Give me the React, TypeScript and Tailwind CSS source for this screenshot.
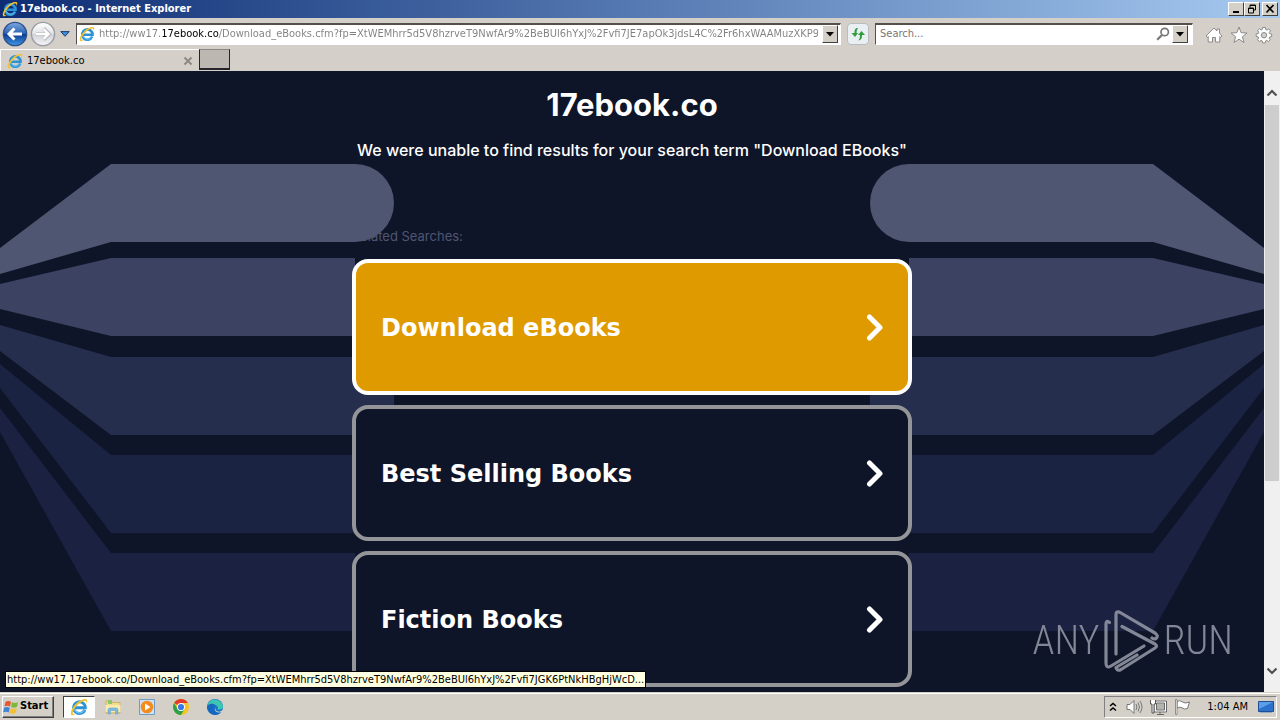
import React from "react";

const CHROME_FONT = "font-['DejaVu_Sans_Condensed','DejaVu_Sans',sans-serif]";

const PAGE_URL =
  "http://ww17.17ebook.co/Download_eBooks.cfm?fp=XtWEMhrr5d5V8hzrveT9NwfAr9%2BeBUl6hYxJ%2Fvfi7JE7apOk3jdsL4C%2Fr6hxWAAMuzXKP957";
const LINK_URL =
  "http://ww17.17ebook.co/Download_eBooks.cfm?fp=XtWEMhrr5d5V8hzrveT9NwfAr9%2BeBUl6hYxJ%2Fvfi7JGK6PtNkHBgHjWcD...";

const RAISED = "border border-t-white border-l-white border-r-[#404040] border-b-[#404040] bg-[#d4d0c8]";

function IeLogo({ className }: { className: string }) {
  return (
    <svg viewBox="0 0 16 16" className={className} aria-hidden="true">
      <path d="M13.2 10.6A5.2 5.2 0 1 1 13.6 8.7H4.4" fill="none" stroke="#2b93d6" strokeWidth="2.6" />
      <path d="M12.6 11A4.8 4.8 0 0 1 4 10" fill="none" stroke="#6cc4f2" strokeWidth="1" />
      <path
        d="M1.2 15C-.6 12.500 3.500 5.500 9 2.300C12 .600 15.500 .200 15.300 2.600C15.200 3.600 14.700 4.600 14.300 5.200C14.900 3 14 1.900 11.800 2.800C7 4.600 2.500 10.500 2.400 13.500C2.500 14.500 3.500 14.500 5 13.700C3.600 15.100 2 15.800 1.200 15Z"
        fill="#f2c230"
      />
    </svg>
  );
}

function NavArrow({ id, muted, className }: { id: string; muted?: boolean; className: string }) {
  return (
    <svg viewBox="0 0 26 26" className={className} aria-hidden="true">
      <defs>
        <linearGradient id={id} x1="0" y1="0" x2="0" y2="1">
          <stop offset="0" stopColor={muted ? "#ffffff" : "#7fa9de"} />
          <stop offset=".48" stopColor={muted ? "#e3e5e8" : "#2a62b4"} />
          <stop offset=".52" stopColor={muted ? "#cfd2d8" : "#0b3c92"} />
          <stop offset="1" stopColor={muted ? "#f6f7f8" : "#3f9be6"} />
        </linearGradient>
      </defs>
      <circle cx="13" cy="13" r="11.600" fill={`url(#${id})`} stroke={muted ? "#9a9ca4" : "#2c4f8c"} strokeWidth="1.400" />
      <path
        d={muted ? "M6 13H19M13.500 7.500L19 13L13.500 18.500" : "M20 13H7M12.500 7.500L7 13L12.500 18.500"}
        fill="none"
        stroke={muted ? "#b9bbc1" : "#ffffff"}
        strokeWidth={muted ? 4 : 3}
      />
      {muted && <path d="M6 13H18M13.500 8L18.500 13L13.500 18" fill="none" stroke="#fff" strokeWidth="2.400" />}
    </svg>
  );
}

function TitleBar() {
  const button = `flex h-[14px] w-4 items-center justify-center ${RAISED}`;
  return (
    <header className="flex h-[18px] shrink-0 items-center bg-linear-to-r from-[#0f2d74] to-[#a6caf0] pl-0.5 pr-0.5">
      <IeLogo className="mr-0.5 size-4" />
      <h1 className="flex-1 text-[11px] leading-[14px] font-bold text-white">17ebook.co - Internet Explorer</h1>
      <div className="flex">
        <button aria-label="Minimize" className={button}>
          <svg viewBox="0 0 12 10" className="h-2.5 w-3"><path d="M3 8H9" stroke="#000" strokeWidth="2" /></svg>
        </button>
        <button aria-label="Restore" className={button}>
          <svg viewBox="0 0 12 10" className="h-2.5 w-3">
            <path d="M4 3.500V1H9.500V6H8M4 1.500H9.500M2.500 4H7.500V9H2.500ZM2.500 4.500H7.500" fill="none" stroke="#000" />
          </svg>
        </button>
        <button aria-label="Close" className={`ml-0.5 ${button}`}>
          <svg viewBox="0 0 12 10" className="h-2.5 w-3"><path d="M2.500 1L9.500 8.500M9.500 1L2.500 8.500" stroke="#000" strokeWidth="1.700" /></svg>
        </button>
      </div>
    </header>
  );
}

function DropButton({ label }: { label: string }) {
  return (
    <button
      aria-label={label}
      className="flex h-[18px] w-4 shrink-0 items-center justify-center border border-t-white border-l-white border-r-[#404040] border-b-[#404040] bg-[#d4d0c8]"
    >
      <svg viewBox="0 0 8 5" className="h-[5px] w-2"><path d="M0 0H8L4 4.500Z" fill="#000" /></svg>
    </button>
  );
}

function NavigationBar() {
  const field = "flex h-[22px] min-w-0 items-center border-t-2 border-l border-b border-r border-t-[#55504c] border-l-[#55504c] border-b-white border-r-white bg-white";
  return (
    <nav className="flex h-[31px] shrink-0 items-center pl-0.5 pr-[7px]">
      <button aria-label="Back"><NavArrow id="back" className="size-[26px]" /></button>
      <button aria-label="Forward" className="ml-0.5"><NavArrow id="forward" muted className="size-[26px]" /></button>
      <button aria-label="Recent pages" className="ml-1 mr-1.5">
        <svg viewBox="0 0 10 6" className="h-1.5 w-2.5"><path d="M.8.600H9.200L5 5.300Z" fill="#3e8fd8" stroke="#1d3f72" /></svg>
      </button>
      <div className={`flex-1 pl-0.5 pr-0.5 ${field}`}>
        <IeLogo className="mr-1 size-4 shrink-0" />
        <input
          aria-label="Address"
          readOnly
          value={PAGE_URL}
          className="min-w-0 flex-1 bg-[linear-gradient(90deg,#808080_64px,#000_64px,#000_120px,#808080_120px)] bg-clip-text text-[11px] leading-4 text-transparent outline-none"
        />
        <span className="w-1" />
        <DropButton label="Show address bar list" />
      </div>
      <button aria-label="Refresh" className="mx-1.5 flex h-[22px] w-[22px] shrink-0 items-center justify-center rounded-sm border border-[#b9bcc0] bg-[#e9eff2]">
        <svg viewBox="0 0 16 14" className="h-3.5 w-4">
          <path d="M8 1C5 1 4.500 3 4.500 6H1.500L5 10L8 6H6.500C6.500 4 7 2.500 8 1Z" fill="#2f9e3c" />
          <path d="M8.500 13.500C11.500 13 12 11 12 8H15L11.500 4L8 8H10C10 10.500 9.500 12 8.500 13.500Z" fill="#2f9e3c" />
        </svg>
      </button>
      <div className={`w-[318px] pl-1 pr-1 ${field}`}>
        <input aria-label="Search" placeholder="Search..." className="min-w-0 flex-1 text-[11px] leading-4 outline-none placeholder:text-[#777]" />
        <svg viewBox="0 0 14 14" className="mr-0.5 size-3.5 shrink-0" aria-hidden="true">
          <circle cx="8.700" cy="5" r="3.700" fill="none" stroke="#777" strokeWidth="1.700" />
          <path d="M6 8L1.200 12.800" stroke="#777" strokeWidth="2.200" />
        </svg>
        <DropButton label="Choose search provider" />
      </div>
      <div className="ml-3 flex shrink-0 gap-[7px] pt-0.5">
        <button aria-label="Home">
          <svg viewBox="0 0 18 18" className="size-[18px]">
            <path d="M9 2L12 5V3H14.500V7.300L17 10L15.500 11.200L14.800 10.500V16H10.500V11.500H7.500V16H3.200V10.500L2.500 11.200L1 10Z" fill="#fff" stroke="#8b8b8b" strokeLinejoin="round" />
          </svg>
        </button>
        <button aria-label="Favorites">
          <svg viewBox="0 0 18 18" className="size-[18px]">
            <path d="M9 1L11.100 6.700L17 7L12.400 10.700L14 16.500L9 13.200L4 16.500L5.600 10.700L1 7L6.900 6.700Z" fill="#fff" stroke="#8b8b8b" strokeLinejoin="round" />
          </svg>
        </button>
        <button aria-label="Tools">
          <svg viewBox="0 0 18 18" className="size-[18px]">
            <path
              d="M7.600 1.500H10.400L10.800 3.600L12 4.100L13.800 2.900L15.500 4.800L14.200 6.500L14.700 7.700L16.700 8V10.600L14.600 11L14.100 12.200L15.300 13.800L13.400 15.600L11.800 14.400L10.600 14.900L10.200 16.900H7.600L7.200 14.900L6 14.400L4.400 15.600L2.500 13.700L3.700 12.100L3.200 10.900L1.200 10.500V7.900L3.300 7.500L3.800 6.300L2.600 4.600L4.500 2.800L6.100 4L7.200 3.600Z"
              fill="#fff" stroke="#8b8b8b" strokeLinejoin="round"
            />
            <circle cx="9" cy="9.200" r="2.700" fill="#d4d0c8" stroke="#8b8b8b" />
          </svg>
        </button>
      </div>
    </nav>
  );
}

function TabStrip() {
  return (
    <div className="flex h-[22px] shrink-0 items-start">
      <div className="flex h-[22px] w-[199px] items-center border-t border-l border-white pl-1.5 pr-1.5">
        <IeLogo className="mr-1 size-4" />
        <span className="flex-1 text-[11px] leading-4 text-black">17ebook.co</span>
        <button aria-label="Close tab">
          <svg viewBox="0 0 10 10" className="size-2.5"><path d="M1.500 1.500L8.500 8.500M8.500 1.500L1.500 8.500" stroke="#8a8784" strokeWidth="1.800" /></svg>
        </button>
      </div>
      <button aria-label="New tab" className="h-[21px] w-[31px] border border-b-2 border-[#25232c] border-t-[#8a8784] bg-[#bdb7b2]" />
    </div>
  );
}

const WING = [
  { fill: "#4f5671", d: "M0 248L111 164H355A39 39 0 0 1 355 242H111L0 274Z" },
  { fill: "#3b4262", d: "M0 284L111 258H355V336H111L0 309Z" },
  { fill: "#262e4e", d: "M0 325L111 357H394V435H111L0 351Z" },
  { fill: "#1b2343", d: "M0 364L111 455H394V533H111L0 388Z" },
  { fill: "#1a2141", d: "M0 408L111 553H355V631H111L0 432Z" },
];

function Backdrop() {
  const wing = WING.map((s) => <path key={s.d} d={s.d} fill={s.fill} />);
  return (
    <svg viewBox="0 71 1264 621" preserveAspectRatio="xMidYMin slice" className="absolute inset-0 h-full w-full" aria-hidden="true">
      {wing}
      <g transform="matrix(-1 0 0 1 1264 0)">{wing}</g>
    </svg>
  );
}

function ResultLink({ label, active }: { label: string; active?: boolean }) {
  return (
    <a
      href="#"
      className={`flex h-[136px] items-center justify-between rounded-2xl border-4 pr-6 pl-[25px] pt-0.5 font-['DejaVu_Sans',sans-serif] text-[24px] leading-8 font-bold text-white ${
        active ? "border-white bg-[#df9a00]" : "border-[#949598] bg-[#0f1528]"
      }`}
    >
      {label}
      <svg viewBox="0 0 18 28" className="h-7 w-[18px]" aria-hidden="true">
        <path d="M3.500 3L14 13.500L3.500 24" fill="none" stroke="#fff" strokeWidth="5" strokeLinecap="round" strokeLinejoin="round" />
      </svg>
    </a>
  );
}

function Watermark() {
  return (
    <div className="absolute right-[31px] bottom-5 flex h-[62px] items-center gap-1 text-[#8f93a1] opacity-90">
      <span className="font-['Roboto_Condensed','Liberation_Sans_Narrow',Roboto,sans-serif] text-[40px] leading-[62px] font-light">ANY</span>
      <svg viewBox="0 0 56 62" className="h-[62px] w-14" fill="none" stroke="currentColor" strokeWidth="3.200" strokeLinejoin="round" strokeLinecap="round" aria-hidden="true">
        <path d="M5.500 12.500Q2 9.500 2 14V53Q2 59 7 56L40 36" />
        <path d="M12 44V5Q12 0 17 3L51 23Q55 26 52 28.500Q50 29.500 48 28" />
        <path d="M18 16.500L51 34Q54 36 51 38L17 59.500Q13 61.500 12 57.500L33 45" />
      </svg>
      <span className="font-['Roboto_Condensed','Liberation_Sans_Narrow',Roboto,sans-serif] text-[40px] leading-[62px] font-light">RUN</span>
    </div>
  );
}

function ScrollBar() {
  return (
    <div className="flex w-4 shrink-0 flex-col bg-[#f0f0f0]">
      <button aria-label="Scroll up" className="flex h-[34px] items-center justify-center pt-2.5">
        <svg viewBox="0 0 12 8" className="h-2 w-3"><path d="M1.500 6.500L6 2L10.500 6.500" fill="none" stroke="#505050" strokeWidth="2.200" /></svg>
      </button>
      <div className="flex flex-1 flex-col">
        <div className="mx-px h-[69%] bg-[#cdcdcd]" />
      </div>
      <button aria-label="Scroll down" className="flex h-[42px] items-center justify-center">
        <svg viewBox="0 0 12 8" className="h-2 w-3"><path d="M1.500 1.500L6 6L10.500 1.500" fill="none" stroke="#505050" strokeWidth="2.200" /></svg>
      </button>
    </div>
  );
}

function Taskbar() {
  const icon = "size-[18px]";
  return (
    <footer className="flex h-7 shrink-0 items-center border-t border-[#d4d0c8] bg-[#d4d0c8] pl-0.5 pr-[3px] shadow-[inset_0_1px_0_#fff]">
      <button className={`flex h-[22px] w-[52px] items-center gap-px text-[11px] font-bold text-black shadow-[inset_-1px_-1px_0_#808080] ${RAISED}`}>
        <svg viewBox="0 0 16 16" className="size-4" aria-hidden="true">
          <path d="M2.500 3Q5 1 8 2.700L7 7.500Q4.500 6 1.500 7.500Z" fill="#e8562c" />
          <path d="M9 3Q12 4.800 15 3L14 7.800Q11 9.500 8 7.900Z" fill="#7db83b" />
          <path d="M1.200 8.700Q4 7.200 6.800 8.800L5.800 13.500Q3 12 0 13.500Z" fill="#3f83d4" />
          <path d="M7.800 9.200Q10.500 10.800 13.800 9.200L12.700 14Q9.500 15.500 6.800 14Z" fill="#f6bf2f" />
        </svg>
        Start
      </button>
      <div className="ml-[9px] flex items-center gap-4">
        <button aria-label="Internet Explorer" className="-mr-[7px] flex h-[22px] w-8 items-center justify-center border border-t-[#404040] border-l-[#404040] border-r-white border-b-white bg-white">
          <IeLogo className={icon} />
        </button>
        <button aria-label="File Explorer">
          <svg viewBox="0 0 18 18" className={icon}>
            <path d="M2 3H7L8 4.500H16V15H2Z" fill="#f3dc8b" stroke="#c9a548" strokeWidth=".700" />
            <path d="M4 2H8V6H4Z" fill="#8cc66b" />
            <path d="M1.500 7H16.500V14H1.500Z" fill="#f9ebae" />
            <path d="M4 16V12Q4 10 6 10H12Q14 10 14 12V16H11.500V12.500H6.500V16Z" fill="#7dbbe4" stroke="#5a9ac6" strokeWidth=".500" />
          </svg>
        </button>
        <button aria-label="Media Player">
          <svg viewBox="0 0 18 18" className={icon}>
            <path d="M1.500 1.500H16.500V16.500H1.500Z" fill="#cfe2f2" stroke="#6d9cc7" />
            <circle cx="9" cy="9" r="6.300" fill="#f48b1f" />
            <path d="M7 5.500V12.500L12.500 9Z" fill="#fff" />
          </svg>
        </button>
        <button aria-label="Chrome">
          <svg viewBox="0 0 18 18" className={icon}>
            <circle cx="9" cy="9" r="8" fill="#f6c51f" />
            <path d="M9 9L2.100 5A8 8 0 0 1 15.900 5H9Z" fill="#e23b2e" />
            <path d="M2.100 5A8 8 0 0 0 9 17L12.500 11L9 9L5.500 11Z" fill="#2da04a" />
            <circle cx="9" cy="9" r="4" fill="#fff" />
            <circle cx="9" cy="9" r="3.100" fill="#3b78e7" />
          </svg>
        </button>
        <button aria-label="Edge">
          <svg viewBox="0 0 18 18" className={icon}>
            <circle cx="9" cy="9" r="8" fill="#1673c8" />
            <path d="M1.100 9A8 8 0 0 1 17 8.500C17 11 14.500 12 11.500 11.500C12.500 9 11 7 8 7C5 6.500 2 7 1.100 9Z" fill="#3ec6b0" />
            <path d="M1.100 8.500C2 5.500 7 5 9.500 7C6.500 8 6.500 12 9 14C11 15.500 13.500 15 15.500 13.500A8 8 0 0 1 1.100 8.500Z" fill="#1568bd" />
            <path d="M10 9C8.500 10 9.500 13 12 13.500C14 14 15.500 13 16.500 12L17.500 14L13 14.500C8.500 14 8 10.500 10 9Z" fill="#d4d0c8" />
          </svg>
        </button>
      </div>
      <div className="ml-auto flex h-[22px] items-center border border-t-[#808080] border-l-[#808080] border-r-white border-b-white pl-1 pr-0.5">
        <button aria-label="Show hidden icons" className="mr-2">
          <svg viewBox="0 0 8 10" className="h-2.5 w-2"><path d="M1 4L4 1.500L7 4M1 8.500L4 6L7 8.500" fill="none" stroke="#000" strokeWidth="1.500" /></svg>
        </button>
        <div className="flex gap-1.5">
          <svg viewBox="0 0 18 18" className={icon} role="img" aria-label="Volume">
            <path d="M2 6.500H5L9 2.500V15.500L5 11.500H2Z" fill="#fff" stroke="#777" />
            <path d="M11 6Q13 9 11 12M13 4.500Q16 9 13 13.500M15 3Q19 9 15 15" fill="none" stroke="#777" />
          </svg>
          <svg viewBox="0 0 18 18" className={icon} role="img" aria-label="Network">
            <path d="M6 4H16.500V13H6Z" fill="#b5b3ae" stroke="#fff" strokeWidth="2.500" />
            <path d="M5 3H17.500V14H5ZM7.500 5H15.500V12H7.500ZM8 16.500H15M11 14V16" fill="none" stroke="#666" />
            <path d="M1.500 2V6H3V15H5V6H6.500V2" fill="#fff" stroke="#555" />
          </svg>
          <svg viewBox="0 0 18 18" className={icon} role="img" aria-label="Action Center">
            <path d="M4 3.500Q7 1.500 9.500 4Q12 6 16.500 4L14.500 10.500Q11 12 9 9.800Q7 8.500 4 10Z" fill="#fff" stroke="#777" />
            <path d="M2.500 1.500H4V16.500H2.500Z" fill="#fff" stroke="#777" strokeWidth=".800" />
          </svg>
        </div>
        <time className="mr-2.5 ml-4 text-[11px] leading-4 whitespace-nowrap text-black">1:04 AM</time>
        <button aria-label="Show desktop">
          <svg viewBox="0 0 16 14" className="h-3.5 w-4">
            <path d="M.5 1.500H15.500V11.500H.5Z" fill="#2b72cc" stroke="#1f4e94" />
            <path d="M1 2H15L1 9Z" fill="#5c9fe6" />
            <path d="M2 12.500H14" stroke="#91a9c4" />
          </svg>
        </button>
      </div>
    </footer>
  );
}

export default function App() {
  return (
    <div className={`flex h-screen flex-col overflow-hidden bg-[#d4cfc8] ${CHROME_FONT}`}>
      <TitleBar />
      <NavigationBar />
      <TabStrip />
      <div className="flex min-h-0 flex-1">
        <main className="relative min-w-0 flex-1 overflow-hidden bg-[#0f1529] font-[Inter,sans-serif]">
          <Backdrop />
          <div className="relative mx-auto flex w-[560px] flex-col">
            <h2 className="pt-4 text-center text-[31px] leading-9 font-bold text-white">17ebook.co</h2>
            <p className="pt-[15px] text-center text-[16px] leading-6 font-medium whitespace-nowrap text-white">
              We were unable to find results for your search term "Download EBooks"
            </p>
            <p className="pt-[66px] text-[13px] leading-4 text-[#4f5671]">Related Searches:</p>
            <div className="flex flex-col gap-2.5 pt-[15px]">
              <ResultLink label="Download eBooks" active />
              <ResultLink label="Best Selling Books" />
              <ResultLink label="Fiction Books" />
            </div>
          </div>
          <Watermark />
          <div className={`absolute bottom-1 left-[5px] h-[17px] border border-black bg-[#ffffe1] px-px text-[11px] leading-[15px] whitespace-nowrap text-black ${CHROME_FONT}`}>
            {LINK_URL}
          </div>
        </main>
        <ScrollBar />
      </div>
      <Taskbar />
    </div>
  );
}
